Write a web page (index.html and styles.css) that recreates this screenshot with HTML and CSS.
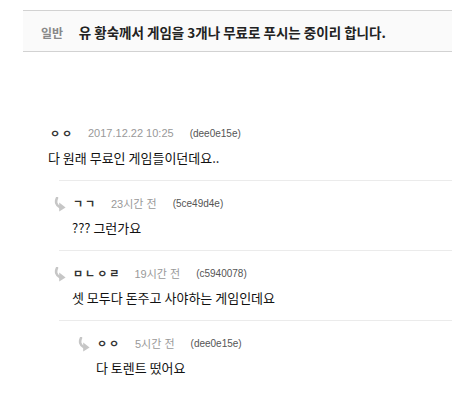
FILE: index.html
```html
<html>
<head>
    <meta charset="UTF-8">
    <title>일반 - 댓글</title>
    <link rel="stylesheet" href="styles.css">
</head>
<body>

<div class="post-head">
    <span class="cat">일반</span>
    <span class="subject">유 황숙께서 게임을 3개나 무료로 푸시는 중이리 합니다.</span>
</div>

<div class="comments">
    <div class="cmt top">
        <div class="meta">
            <span class="nick">ㅇㅇ</span>
            <span class="date">2017.12.22 10:25</span>
            <span class="ip">(dee0e15e)</span>
        </div>
        <div class="text">다 원래 무료인 게임들이던데요..</div>
    </div>

    <div class="cmt reply">
        <div class="meta">
            <svg class="arrow" width="12" height="15" viewBox="0 0 12 15"><path d="M3 1 C1.4 4.5 1.8 8.5 6 10.2" stroke="#c6c6c6" stroke-width="2.6" fill="none" stroke-linecap="round"/><path d="M5.2 5.6 L11.6 10.6 L5.2 14.4 Z" fill="#c6c6c6"/></svg>
            <span class="nick">ㄱㄱ</span>
            <span class="date">23시간 전</span>
            <span class="ip">(5ce49d4e)</span>
        </div>
        <div class="text">??? 그런가요</div>
    </div>

    <div class="cmt reply">
        <div class="meta">
            <svg class="arrow" width="12" height="15" viewBox="0 0 12 15"><path d="M3 1 C1.4 4.5 1.8 8.5 6 10.2" stroke="#c6c6c6" stroke-width="2.6" fill="none" stroke-linecap="round"/><path d="M5.2 5.6 L11.6 10.6 L5.2 14.4 Z" fill="#c6c6c6"/></svg>
            <span class="nick">ㅁㄴㅇㄹ</span>
            <span class="date">19시간 전</span>
            <span class="ip">(c5940078)</span>
        </div>
        <div class="text">셋 모두다 돈주고 사야하는 게임인데요</div>
    </div>

    <div class="cmt reply deep">
        <div class="meta">
            <svg class="arrow" width="12" height="15" viewBox="0 0 12 15"><path d="M3 1 C1.4 4.5 1.8 8.5 6 10.2" stroke="#c6c6c6" stroke-width="2.6" fill="none" stroke-linecap="round"/><path d="M5.2 5.6 L11.6 10.6 L5.2 14.4 Z" fill="#c6c6c6"/></svg>
            <span class="nick">ㅇㅇ</span>
            <span class="date">5시간 전</span>
            <span class="ip">(dee0e15e)</span>
        </div>
        <div class="text">다 토렌트 떴어요</div>
    </div>
</div>

</body>
</html>
```

FILE: styles.css
```css
body {
    margin: 0;
    background: #fff;
    color: #111;
    font-family: "Noto Sans CJK KR", sans-serif;
    overflow: hidden;
}
.post-head {
    margin: 10px 0 0 23px;
    height: 40px;
    line-height: 40px;
    padding-left: 18px;
    background: #fafafa;
    border-top: 1px solid #d2d2d2;
    border-bottom: 1px solid #d2d2d2;
    font-weight: bold;
    white-space: nowrap;
}
.cat {
    font-size: 12px;
    color: #888;
    margin-right: 12px;
}
.subject {
    font-size: 13.5px;
    color: #222;
}
.comments {
    margin-top: 59px;
}
.cmt {
    padding: 13px 0 13px 0;
}
.cmt.top {
    margin-left: 48px;
}
.cmt.top .meta {
    padding-left: 2px;
}
.cmt.reply {
    margin-left: 59px;
    border-top: 1px solid #ebebeb;
}
.cmt.deep {
    padding-left: 24px;
}
.meta {
    display: flex;
    align-items: center;
    height: 18px;
    white-space: nowrap;
}
.arrow {
    flex: none;
    margin-left: -5px;
    margin-right: 7px;
    margin-top: 3px;
}
.nick {
    flex: none;
    font-size: 11px;
    font-weight: bold;
    letter-spacing: 2px;
    color: #333;
    min-width: 25px;
    margin-right: 13px;
}
.date {
    font-family: "Liberation Sans", "Noto Sans CJK KR", sans-serif;
    font-size: 11px;
    color: #999;
    margin-right: 16px;
}
.ip {
    font-family: "Liberation Sans", sans-serif;
    font-size: 10px;
    color: #555;
}
.text {
    margin-top: 7px;
    line-height: 18px;
    font-size: 13px;
}
.reply .text {
    padding-left: 13px;
}
```
